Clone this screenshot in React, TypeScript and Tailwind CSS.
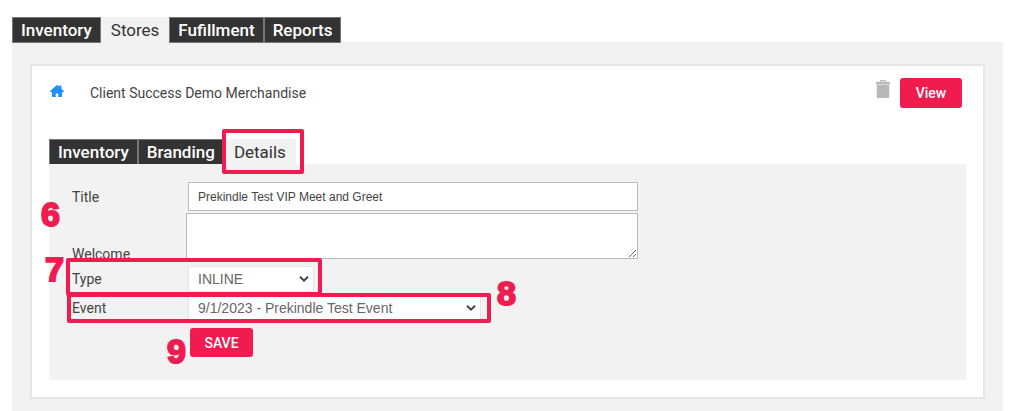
import type { ReactNode } from "react";

type Tab = { label: string; active?: boolean; marked?: boolean };

function Callout({ className, children }: { className: string; children: ReactNode }) {
  return (
    <span
      aria-hidden="true"
      className={`pointer-events-none absolute z-20 font-['Liberation_Sans',sans-serif] text-[34px] leading-8 font-bold text-[#f01c4f] [-webkit-text-stroke:2px_#f01c4f] ${className}`}
    >
      {children}
    </span>
  );
}

function Frame({ className }: { className: string }) {
  return (
    <span
      aria-hidden="true"
      className={`pointer-events-none absolute z-10 rounded-xs border-4 border-[#f01c4f] ${className}`}
    />
  );
}

function Tabs({ tabs, label }: { tabs: Tab[]; label: string }) {
  return (
    <nav aria-label={label} className="flex">
      {tabs.map((tab) =>
        tab.active ? (
          <a key={tab.label} href="#" aria-current="page" className="relative h-[26px] bg-[#f2f2f2] px-[10px] text-[17px] leading-[26px] text-[#333]">
            {tab.label}
            {tab.marked && <Frame className="-top-[10px] -right-[8px] -bottom-[9px] -left-[2px]" />}
          </a>
        ) : (
          <a key={tab.label} href="#" className="h-[26px] border border-[#777] bg-[#333] px-2 text-[17px] leading-6 font-medium text-white">
            {tab.label}
          </a>
        ),
      )}
    </nav>
  );
}

function Chevron() {
  return (
    <svg aria-hidden="true" viewBox="0 0 10 7" className="pointer-events-none absolute top-1/2 right-[5px] h-[7px] w-[10px] -translate-y-1/2" fill="none" stroke="#444" strokeWidth="2">
      <path d="M1 1.2 5 5.2 9 1.2" />
    </svg>
  );
}

const labelClass = "w-[116px] shrink-0 text-sm text-[#444]";
const selectClass =
  "h-[26px] w-full appearance-none border border-[#e6e6e6] bg-white pl-[9px] font-['Liberation_Sans',sans-serif] text-sm text-[#666]";

export default function App() {
  return (
    <div className="bg-white pt-[17px] pr-[10px] pl-3 font-[Roboto,sans-serif] text-[#444]">
      <Tabs label="Main" tabs={[{ label: "Inventory" }, { label: "Stores", active: true }, { label: "Fufillment" }, { label: "Reports" }]} />
      <main className="-mt-px bg-[#f2f2f2] px-[18px] pt-[22px] pb-3">
        <section className="border-2 border-[#e6e6e6] bg-white px-[17px] pb-[17px]">
          <header className="flex h-[73px] items-start pt-3 pr-1">
            <a href="#" aria-label="Home" className="mt-[7px] ml-px">
              <svg aria-hidden="true" viewBox="0 0 14 12" className="h-3 w-[14px]" fill="#1e90ff">
                <path d="M6.2.4Q7-.3 7.8.4L9.2 1.7V.5h2.2v3.2L13.8 6q.3.9-.6.9h-1.1v4.3q0 .8-.8.8H8.3V8.6H5.7V12h-3q-.8 0-.8-.8V6.9H.8Q-.1 6.9.2 6Z" />
              </svg>
            </a>
            <h1 className="ml-[26px] pt-[5px] text-sm">Client Success Demo Merchandise</h1>
            <button type="button" aria-label="Delete" className="mt-[2px] ml-auto">
              <svg aria-hidden="true" viewBox="0 0 14 18" className="h-[18px] w-[14px]" fill="#b8b8b8">
                <path d="M4 1.8V1q0-1 1-1h4q1 0 1 1v.8h3q1 0 1 1v1.7H0V2.8q0-1 1-1ZM5.2 1.8h3.6V1H5.2Z" />
                <path d="M.7 5h12.6v12q0 1-1 1H1.7q-1 0-1-1Z" />
              </svg>
            </button>
            <button type="button" className="ml-[10px] h-[30px] w-[62px] rounded-[3px] bg-[#f01c4f] text-sm font-medium text-white">View</button>
          </header>

          <Tabs label="Store" tabs={[{ label: "Inventory" }, { label: "Branding" }, { label: "Details", active: true, marked: true }]} />
          <form className="relative -mt-px bg-[#f2f2f2] pt-[17px] pb-[23px] pl-[23px]" onSubmit={(e) => e.preventDefault()}>
            <div className="relative mb-px flex h-[31px] items-center">
              <label htmlFor="title" className={labelClass}>Title</label>
              <input
                id="title"
                defaultValue="Prekindle Test VIP Meet and Greet"
                className="h-[29px] w-full max-w-[450px] border border-[#bbb] bg-white px-[9px] font-['Liberation_Sans',sans-serif] text-xs text-[#444]"
              />
              <Callout className="top-[17px] -left-[31px]">6</Callout>
            </div>
            <div className="flex h-[51px] items-end">
              <label htmlFor="welcome" className={labelClass}>Welcome</label>
              <textarea
                id="welcome"
                className="-ml-[2px] h-[46px] w-full max-w-[452px] self-start border border-[#bbb] bg-white"
              />
            </div>
            <div className="relative flex h-[29px] items-center">
              <label htmlFor="type" className={labelClass}>Type</label>
              <div className="relative w-[126px]">
                <select id="type" className={selectClass}>
                  <option>INLINE</option>
                </select>
                <Chevron />
              </div>
              <Frame className="-top-[6px] -left-[6px] h-[38px] w-64" />
              <Callout className="-top-[11px] -left-[27px]">7</Callout>
            </div>
            <div className="relative flex h-[29px] items-center">
              <label htmlFor="event" className={labelClass}>Event</label>
              <div className="relative w-[293px]">
                <select id="event" className={selectClass}>
                  <option>9/1/2023 - Prekindle Test Event</option>
                </select>
                <Chevron />
              </div>
              <Frame className="top-0 -left-[5px] h-[30px] w-[424px]" />
              <Callout className="-top-[16px] left-[425px]">8</Callout>
            </div>
            <div className="relative flex pt-[6px] pl-[118px]">
              <button type="submit" className="h-[29px] w-[63px] rounded-[3px] bg-[#f01c4f] text-sm font-medium text-white">SAVE</button>
              <Callout className="top-[13px] left-[95px]">9</Callout>
            </div>
          </form>
        </section>
      </main>
    </div>
  );
}
